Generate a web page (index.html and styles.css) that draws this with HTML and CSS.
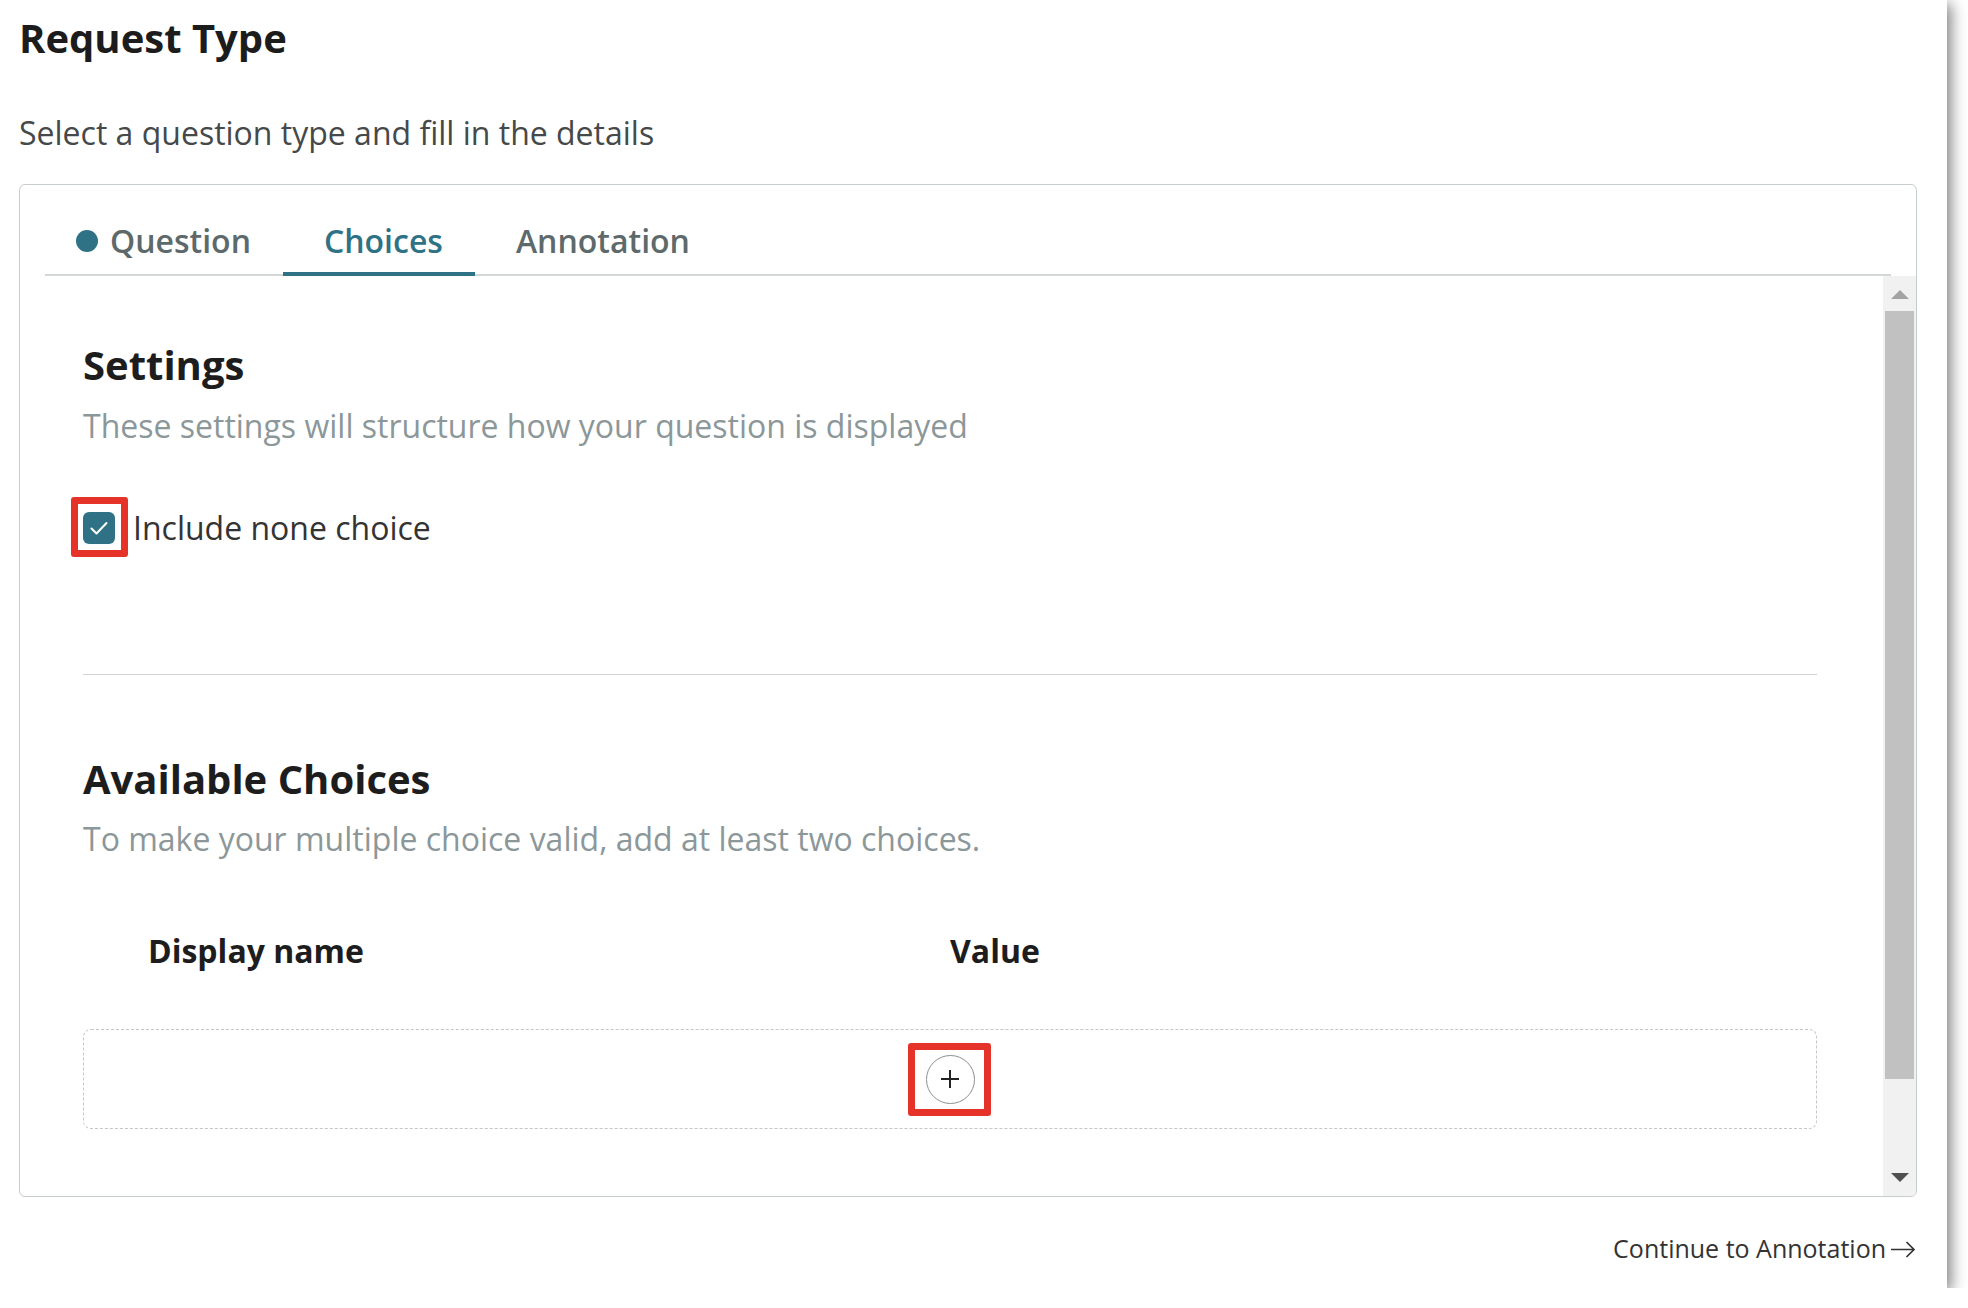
FILE: index.html
```html
<!DOCTYPE html>
<html lang="en">
<head>
<meta charset="utf-8">
<title>Request Type</title>
<link rel="stylesheet" href="styles.css">
</head>
<body>
<div class="page">
  <h1 class="title">Request Type</h1>
  <p class="subtitle">Select a question type and fill in the details</p>
  <div class="card">
    <div class="tabs">
      <div class="tab tab-first"><span class="dot"></span>Question</div>
      <div class="tab tab-active">Choices</div>
      <div class="tab">Annotation</div>
    </div>
    <div class="scroll">
      <div class="content">
        <h2 class="section-title">Settings</h2>
        <p class="section-desc">These settings will structure how your question is displayed</p>
        <label class="check-row">
          <span class="checkbox highlight-check">
            <svg width="32" height="32" viewBox="0 0 32 32"><polyline points="8.5,16.5 13.5,21.5 23.5,11" fill="none" stroke="#ffffff" stroke-width="2" stroke-linecap="round" stroke-linejoin="round"/></svg>
          </span>
          <span class="check-label">Include none choice</span>
        </label>
        <hr class="divider">
        <h2 class="section-title section-second">Available Choices</h2>
        <p class="section-desc section-desc-second">To make your multiple choice valid, add at least two choices.</p>
        <div class="col-heads">
          <div class="col-head col-name">Display name</div>
          <div class="col-head">Value</div>
        </div>
        <div class="drop-box">
          <span class="add-wrap">
            <button class="add-btn" type="button" aria-label="Add choice">
              <svg width="20" height="20" viewBox="0 0 20 20"><path d="M10 1V19M1 10H19" stroke="#222" stroke-width="2" fill="none"/></svg>
            </button>
          </span>
        </div>
      </div>
      <div class="scrollbar">
        <div class="sb-btn sb-up"><svg width="18" height="10" viewBox="0 0 18 10"><polygon points="0,10 9,1 18,10" fill="#a3a3a3"/></svg></div>
        <div class="sb-track"><div class="sb-thumb"></div></div>
        <div class="sb-btn sb-down"><svg width="18" height="10" viewBox="0 0 18 10"><polygon points="0,0 18,0 9,9" fill="#505050"/></svg></div>
      </div>
    </div>
  </div>
  <div class="footer">
    <a class="continue" href="#">Continue to Annotation<svg class="arrow" width="26" height="18" viewBox="0 0 26 18"><path d="M1 9.5H24M16.5 2L24 9.5L16.5 17" fill="none" stroke="#333" stroke-width="1.7"/></svg></a>
  </div>
</div>
</body>
</html>
```

FILE: styles.css
```css
html, body {
  margin: 0;
  padding: 0;
  background: #ffffff;
}

.page {
  width: 1947px;
  height: 1288px;
  box-sizing: border-box;
  background: #ffffff;
  box-shadow: 4px 4px 14px rgba(0, 0, 0, 0.5);
  padding: 14px 30px 0 19px;
  font-family: "Open Sans", "Noto Sans", Arial, sans-serif;
  color: #333;
}

.title {
  margin: 0;
  font-size: 40px;
  line-height: 48px;
  font-weight: 700;
  color: #1c1c1c;
}

.subtitle {
  margin: 51px 0 0;
  font-size: 32px;
  line-height: 40px;
  color: #45494a;
}

.card {
  margin-top: 31px;
  height: 1013px;
  box-sizing: border-box;
  border: 1px solid #c7cdcd;
  border-radius: 6px;
  display: flex;
  flex-direction: column;
  overflow: hidden;
}

.tabs {
  display: flex;
  margin: 0 25px;
  border-bottom: 2px solid #d3d7d7;
}

.tab {
  display: flex;
  align-items: center;
  padding: 36px 32px 11px 41px;
  margin-bottom: -2px;
  border-bottom: 4px solid transparent;
  font-size: 32px;
  line-height: 40px;
  font-weight: 600;
  color: #5d696b;
}

.tab-first {
  padding-left: 31px;
}

.tab-active {
  color: #2f7286;
  border-bottom-color: #2f7286;
}

.dot {
  width: 22px;
  height: 22px;
  border-radius: 50%;
  background: #2f7286;
  margin-right: 12px;
}

.scroll {
  flex: 1;
  min-height: 0;
  display: flex;
  overflow: hidden;
}

.content {
  flex: 1;
  min-width: 0;
  padding: 65px 66px 0 63px;
  overflow: hidden;
}

.section-title {
  margin: 0;
  font-size: 40px;
  line-height: 48px;
  font-weight: 700;
  color: #1d1d1d;
}

.section-second {
  margin-top: 80px;
}

.section-desc {
  margin: 17px 0 0;
  font-size: 32px;
  line-height: 40px;
  color: #8c9799;
}

.section-desc-second {
  margin-top: 16px;
}

.check-row {
  display: flex;
  align-items: center;
  margin-top: 62px;
}

.checkbox {
  position: relative;
  width: 32px;
  height: 32px;
  border-radius: 6px;
  background: #2f7286;
  display: flex;
}

.highlight-check::after {
  content: "";
  position: absolute;
  top: -15px;
  left: -12px;
  right: -13px;
  bottom: -13px;
  border: 7px solid #e5332a;
  border-radius: 3px;
}

.check-label {
  margin-left: 18px;
  font-size: 32px;
  line-height: 40px;
  color: #333;
}

.divider {
  margin: 126px 0 0;
  border: 0;
  border-top: 1px solid #cfd3d3;
  height: 0;
}

.col-heads {
  display: grid;
  grid-template-columns: 1fr 1fr;
  margin-top: 72px;
}

.col-head {
  font-size: 32px;
  line-height: 40px;
  font-weight: 700;
  color: #1d1d1d;
}

.col-name {
  padding-left: 65px;
}

.drop-box {
  margin-top: 58px;
  height: 100px;
  box-sizing: border-box;
  border: 1px dashed #c2c7c7;
  border-radius: 8px;
  display: flex;
  align-items: center;
  justify-content: center;
}

.add-wrap {
  position: relative;
  display: flex;
}

.add-wrap::after {
  content: "";
  position: absolute;
  top: -12px;
  left: -18px;
  right: -16px;
  bottom: -12px;
  border: 7px solid #e5332a;
  border-radius: 3px;
}

.add-btn {
  width: 49px;
  height: 49px;
  padding: 0;
  border: 1.5px solid #8b9091;
  border-radius: 50%;
  background: #ffffff;
  display: flex;
  align-items: center;
  justify-content: center;
}

.scrollbar {
  width: 33px;
  background: #f1f1f1;
  display: flex;
  flex-direction: column;
}

.sb-btn {
  display: flex;
  align-items: center;
  justify-content: center;
}

.sb-up {
  height: 35px;
}

.sb-down {
  height: 36px;
}

.sb-track {
  flex: 1;
  padding: 0 2px;
}

.sb-thumb {
  height: 768px;
  background: #c1c1c1;
}

.footer {
  display: flex;
  justify-content: flex-end;
  margin-top: 35px;
  padding-right: 1px;
}

.continue {
  display: flex;
  align-items: center;
  font-size: 25px;
  line-height: 32px;
  color: #333;
  text-decoration: none;
}

.arrow {
  margin-left: 4px;
  margin-top: 2px;
}
```
